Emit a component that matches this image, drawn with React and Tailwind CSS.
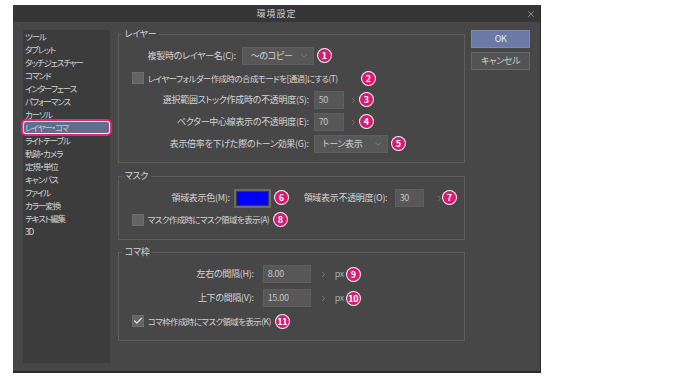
import React from 'react';
import { ChevronDown, ChevronRight, Check, X } from 'lucide-react';

const menu = [
  'ツール', 'タブレット', 'タッチジェスチャー', 'コマンド', 'インターフェース', 'パフォーマンス', 'カーソル',
  'レイヤー・コマ', 'ライトテーブル', '軌跡・カメラ', '定規・単位', 'キャンバス', 'ファイル', 'カラー変換', 'テキスト編集', '3D',
];

function Badge({ n }) {
  return (
    <span className="inline-flex h-[13px] w-[13px] shrink-0 items-center justify-center rounded-full bg-[#d91a72] text-[9px] font-bold leading-none tracking-[-0.5px] text-white shadow-[0_0_0_1px_#f4f4f4]">
      {n}
    </span>
  );
}

function Select({ value, width }) {
  return (
    <div className={`flex h-[18px] items-center justify-between border border-[#5f5f5f] bg-[#575757] pl-[8px] pr-[4px] text-[#cfcfcf] ${width}`}>
      <span>{value}</span>
      <ChevronDown size={10} strokeWidth={1.5} className="text-[#9a9a9a]" />
    </div>
  );
}

function Field({ value, width }) {
  return (
    <div className={`flex h-[18px] items-center border border-[#5f5f5f] bg-[#575757] pl-[4px] text-[#c4c4c4] ${width}`}>
      {value}
    </div>
  );
}

function Box({ checked }) {
  return (
    <span className="flex h-[12px] w-[12px] shrink-0 items-center justify-center border border-[#6e6e6e] bg-[#646464]">
      {checked && <Check size={10} strokeWidth={3} className="text-[#e2e2e2]" />}
    </span>
  );
}

function Arrow() {
  return <ChevronRight size={9} strokeWidth={1.5} className="shrink-0 text-[#9a9a9a]" />;
}

function Group({ title, className, children }) {
  return (
    <fieldset className={`border border-[#5e5e5e] ${className}`}>
      <legend className="ml-[3px] px-[3px] leading-[10px] text-[#d4d4d4]">{title}</legend>
      {children}
    </fieldset>
  );
}

export default function App() {
  return (
    <div className="h-[379px] w-[693px] bg-white pl-[13px] pt-[5px] font-['Noto_Sans_CJK_JP','Noto_Sans',sans-serif] text-[9px] tracking-[-0.3px] [font-feature-settings:'palt']">
      <div className="flex h-[368px] w-[528px] flex-col border-b-2 border-r border-[#2a2a2a] bg-[#474747]">
        {/* title bar */}
        <div className="relative flex h-[17px] shrink-0 items-center justify-center bg-[#363636] text-[#c8c8c8]">
          <span className="tracking-[1px]">環境設定</span>
          <X size={10} strokeWidth={1.5} className="absolute right-[4px] top-[4px] text-[#bdbdbd]" />
        </div>

        <div className="flex flex-1 px-[10px] pb-[8px] pt-[8px]">
          {/* category list */}
          <div className="w-[87px] bg-[#3c3c3c] text-[8.5px] tracking-[-1.1px] text-[#d2d2d2]">
            {menu.map((m) => (
              <div
                key={m}
                className={
                  m === 'レイヤー・コマ'
                    ? 'h-[13px] rounded-[3px] bg-[#626c8f] pl-[2px] leading-[13px] text-[#c7cbd8] shadow-[inset_0_0_0_1px_#f2f2f2,0_0_0_2px_#e0267f]'
                    : 'h-[13px] pl-[2px] leading-[13px]'
                }
              >
                {m}
              </div>
            ))}
          </div>

          {/* settings */}
          <div className="-mt-[1px] ml-[8px] flex w-[349px] flex-col text-[#d4d4d4]">
            <Group title="レイヤー" className="pb-[7px] pt-[6px]">
              <div className="flex h-[22px] items-center">
                <span className="w-[117px] text-right">複製時のレイヤー名(C):</span>
                <div className="ml-[6px]"><Select value="〜のコピー" width="w-[72px]" /></div>
                <span className="ml-[4px]"><Badge n="1" /></span>
              </div>
              <div className="flex h-[22px] items-center pl-[13px]">
                <Box />
                <span className="ml-[4px] w-[214px] shrink-0 whitespace-nowrap text-[8.5px] tracking-[-0.6px]">レイヤーフォルダー作成時の合成モードを[通過]にする(T)</span>
                <Badge n="2" />
              </div>
              <div className="flex h-[22px] items-center">
                <span className="w-[190px] text-right">選択範囲ストック作成時の不透明度(S):</span>
                <div className="ml-[5px]"><Field value="50" width="w-[30px]" /></div>
                <span className="ml-[5px]"><Arrow /></span>
                <span className="ml-[2px]"><Badge n="3" /></span>
              </div>
              <div className="flex h-[22px] items-center">
                <span className="w-[190px] text-right">ベクター中心線表示の不透明度(E):</span>
                <div className="ml-[5px]"><Field value="70" width="w-[30px]" /></div>
                <span className="ml-[5px]"><Arrow /></span>
                <span className="ml-[2px]"><Badge n="4" /></span>
              </div>
              <div className="flex h-[22px] items-center">
                <span className="w-[190px] text-right">表示倍率を下げた際のトーン効果(G):</span>
                <div className="ml-[5px]"><Select value="トーン表示" width="w-[74px]" /></div>
                <span className="ml-[4px]"><Badge n="5" /></span>
              </div>
            </Group>

            <Group title="マスク" className="mt-[8px] pb-[9px] pt-[6px]">
              <div className="flex h-[22px] items-center">
                <span className="w-[111px] text-right">領域表示色(M):</span>
                <div className="ml-[4px] flex h-[19px] w-[37px] items-center justify-center border-2 border-[#6a6a6a] bg-[#3a3a3a]">
                  <div className="h-[13px] w-[31px] bg-[#0000ff]" />
                </div>
                <span className="ml-[4px]"><Badge n="6" /></span>
                <span className="ml-[16px] w-[86px] whitespace-nowrap">領域表示不透明度(O):</span>
                <div className="ml-[5px]"><Field value="30" width="w-[29px]" /></div>
                <span className="ml-[11px]"><Arrow /></span>
                <span className="-ml-[1px]"><Badge n="7" /></span>
              </div>
              <div className="flex h-[21px] items-center pl-[13px]">
                <Box />
                <span className="ml-[4px] w-[126px] shrink-0 whitespace-nowrap text-[8.5px] tracking-[-0.6px]">マスク作成時にマスク領域を表示(A)</span>
                <Badge n="8" />
              </div>
            </Group>

            <Group title="コマ枠" className="mt-[7px] pb-[8px] pt-[5px]">
              <div className="flex h-[24px] items-center">
                <span className="w-[135px] text-right">左右の間隔(H):</span>
                <div className="ml-[9px]"><Field value="8.00" width="w-[48px]" /></div>
                <span className="ml-[8px]"><Arrow /></span>
                <span className="ml-[7px] w-[12px] text-[#a8a8a8]">px</span>
                <Badge n="9" />
              </div>
              <div className="flex h-[24px] items-center">
                <span className="w-[135px] text-right">上下の間隔(V):</span>
                <div className="ml-[9px]"><Field value="15.00" width="w-[48px]" /></div>
                <span className="ml-[8px]"><Arrow /></span>
                <span className="ml-[7px] w-[12px] text-[#a8a8a8]">px</span>
                <Badge n="10" />
              </div>
              <div className="flex h-[22px] items-center pl-[13px]">
                <Box checked />
                <span className="ml-[4px] w-[128px] shrink-0 whitespace-nowrap text-[8.5px] tracking-[-0.6px]">コマ枠作成時にマスク領域を表示(K)</span>
                <Badge n="11" />
              </div>
            </Group>
          </div>

          {/* buttons */}
          <div className="ml-[6px] flex w-[59px] flex-col gap-[4px]">
            <div className="flex h-[18px] items-center justify-center border border-[#7d8ab3] bg-[#6b79a6] text-[#e8eaf2]">OK</div>
            <div className="flex h-[18px] items-center justify-center border border-[#676767] bg-[#535353] text-[#d0d0d0]">キャンセル</div>
          </div>
        </div>
      </div>
    </div>
  );
}
